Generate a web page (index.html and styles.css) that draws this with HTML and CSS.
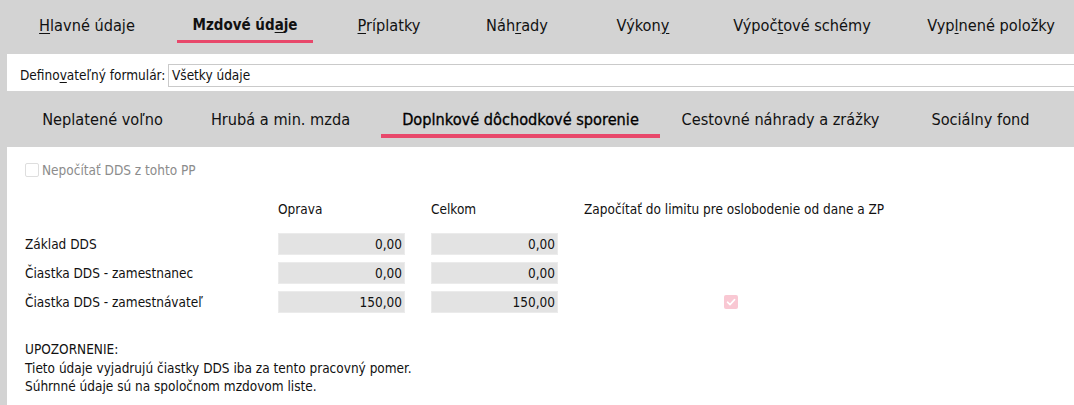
FILE: index.html
```html
<!DOCTYPE html>
<html lang="sk">
<head>
<meta charset="utf-8">
<title>Mzdové údaje</title>
<link rel="stylesheet" href="styles.css">
</head>
<body>
<div class="page">
  <nav class="tabs tabs-main">
    <div class="tab m1"><span class="lbl"><u>H</u>lavné údaje</span></div>
    <div class="tab m2 active"><span class="lbl">Mzdové úd<u>a</u>je</span></div>
    <div class="tab m3"><span class="lbl"><u>P</u>ríplatky</span></div>
    <div class="tab m4"><span class="lbl">Náh<u>r</u>ady</span></div>
    <div class="tab m5"><span class="lbl">Výkon<u>y</u></span></div>
    <div class="tab m6"><span class="lbl">Výpoč<u>t</u>ové schémy</span></div>
    <div class="tab m7"><span class="lbl">Vyp<u>l</u>nené položky</span></div>
  </nav>

  <div class="form-row">
    <label class="form-label">Defino<u>v</u>ateľný formulár:</label>
    <div class="form-input">Všetky údaje</div>
  </div>

  <nav class="tabs tabs-sub">
    <div class="tab s1"><span class="lbl">Neplatené voľno</span></div>
    <div class="tab s2"><span class="lbl">Hrubá a min. mzda</span></div>
    <div class="tab s3 active"><span class="lbl">Doplnkové dôchodkové sporenie</span></div>
    <div class="tab s4"><span class="lbl">Cestovné náhrady a zrážky</span></div>
    <div class="tab s5"><span class="lbl">Sociálny fond</span></div>
  </nav>

  <main class="content">
    <div class="check-row">
      <span class="cb cb-off"></span>
      <span class="check-label">Nepočítať DDS z tohto PP</span>
    </div>

    <div class="grid">
      <div class="cell"></div>
      <div class="cell head">Oprava</div>
      <div class="cell head">Celkom</div>
      <div class="cell head">Započítať do limitu pre oslobodenie od dane a ZP</div>

      <div class="cell label">Základ DDS</div>
      <div class="cell box">0,00</div>
      <div class="cell box">0,00</div>
      <div class="cell"></div>

      <div class="cell label">Čiastka DDS - zamestnanec</div>
      <div class="cell box">0,00</div>
      <div class="cell box">0,00</div>
      <div class="cell"></div>

      <div class="cell label">Čiastka DDS - zamestnávateľ</div>
      <div class="cell box">150,00</div>
      <div class="cell box">150,00</div>
      <div class="cell flag">
        <span class="cb cb-on">
          <svg viewBox="0 0 14 14" width="14" height="14"><path d="M3.5 7.2 L6 9.6 L10.6 4.6" fill="none" stroke="#ffffff" stroke-width="1.6" stroke-linecap="round" stroke-linejoin="round"/></svg>
        </span>
      </div>
    </div>

    <div class="notice">
      <div>UPOZORNENIE:</div>
      <div>Tieto údaje vyjadrujú čiastky DDS iba za tento pracovný pomer.</div>
      <div>Súhrnné údaje sú na spoločnom mzdovom liste.</div>
    </div>
  </main>
</div>
</body>
</html>
```
FILE: styles.css
```css
html, body {
  margin: 0;
  padding: 0;
  background: #ffffff;
}
body {
  font-family: "DejaVu Sans Condensed", "DejaVu Sans", sans-serif;
  font-size: 13.5px;
  color: #111111;
  width: 1074px;
  height: 405px;
  overflow: hidden;
}
.page {
  display: flex;
  flex-direction: column;
  height: 405px;
  background: #d3d3d3;
}
u {
  text-decoration: underline;
  text-underline-offset: 2px;
  text-decoration-thickness: 1px;
}

/* Tabs */
.tabs {
  display: flex;
  background: #d3d3d3;
  overflow: hidden;
  flex: none;
}
.tab {
  flex: none;
  display: flex;
  justify-content: center;
  align-items: flex-start;
  font-size: 16.2px;
  line-height: 19px;
  color: #111111;
  white-space: nowrap;
}
.tab .lbl {
  display: block;
  border-bottom: 3px solid transparent;
}
.tabs-main {
  height: 54px;
}
.tabs-main .tab .lbl {
  padding: 16px 15px 5px;
}
.tabs-main .tab.active .lbl {
  font-weight: bold;
  font-size: 15px;
  border-bottom-color: #e8486b;
}
.m1 { width: 174px; }
.m2 { width: 142px; }
.m3 { width: 146px; }
.m4 { width: 110px; }
.m5 { width: 142px; }
.m6 { width: 176px; }
.m7 { width: 202px; }

.tabs-sub {
  height: 56px;
}
.tabs-sub .tab .lbl {
  padding: 19px 21px 5px;
  border-bottom-width: 4px;
}
.tabs-sub .tab.active .lbl {
  color: #000000;
  -webkit-text-stroke: 0.3px #000000;
  border-bottom-color: #e8486b;
}
.s1 { width: 205px; }
.s2 { width: 151px; }
.s3 { width: 329px; }
.s4 { width: 191px; }
.s5 { width: 209px; }

/* Form row */
.form-row {
  flex: none;
  height: 37px;
  margin-left: 7px;
  background: #ffffff;
  display: flex;
  align-items: flex-start;
  padding-left: 13px;
}
.form-label {
  width: 148px;
  flex: none;
  margin-top: 13px;
  line-height: 17px;
}
.form-input {
  flex: 1;
  height: 21px;
  line-height: 21px;
  margin-top: 10px;
  border: 1px solid #cacaca;
  border-right: none;
  padding-left: 3px;
  background: #ffffff;
}

/* Content */
.content {
  flex: 1;
  margin-left: 7px;
  background: #ffffff;
  padding: 12px 0 0 18px;
}
.check-row {
  display: flex;
  align-items: center;
  gap: 3px;
  height: 22px;
  color: #8c8c8c;
}
.cb {
  display: inline-flex;
  width: 14px;
  height: 14px;
  box-sizing: border-box;
  border-radius: 2px;
  flex: none;
}
.cb-off {
  border: 1px solid #dedede;
  background: #ffffff;
}
.cb-on {
  background: #f9c8d3;
}

.grid {
  display: grid;
  grid-template-columns: 227px 127px 127px 1fr;
  grid-template-rows: 28px 22px 22px 22px;
  column-gap: 26px;
  row-gap: 7px;
  margin-top: 17px;
}
.cell {
  display: flex;
  align-items: center;
  white-space: nowrap;
}
.head {
  align-self: start;
  height: 22px;
}
.box {
  justify-content: flex-end;
  background: #e3e3e3;
  border: 1px solid #ebebeb;
  box-sizing: border-box;
  padding-right: 2px;
}
.flag {
  padding-left: 140px;
}

.notice {
  margin-top: 27px;
  line-height: 18.5px;
}
```
